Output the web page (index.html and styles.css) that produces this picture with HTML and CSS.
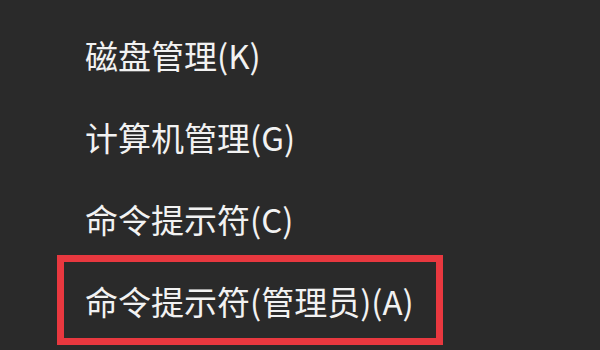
FILE: index.html
```html
<!DOCTYPE html>
<html lang="zh-CN">
<head>
<meta charset="utf-8">
<title>Win+X 菜单</title>
<link rel="stylesheet" href="styles.css">
</head>
<body>
<div class="menu">
  <div class="item">磁盘管理(K)</div>
  <div class="item">计算机管理(G)</div>
  <div class="item">命令提示符(C)</div>
  <div class="item selected">命令提示符(管理员)(A)</div>
</div>
</body>
</html>
```

FILE: styles.css
```css
html, body {
  margin: 0;
  padding: 0;
  background: #2a2a2a;
}

body {
  width: 600px;
  height: 350px;
  overflow: hidden;
  font-family: "Noto Sans CJK SC", "Noto Sans", "Liberation Sans", sans-serif;
}

.menu {
  display: flex;
  flex-direction: column;
  padding-top: 14px;
}

.item {
  position: relative;
  height: 82px;
  line-height: 82px;
  padding-left: 85px;
  font-size: 33px;
  color: #f2f2f2;
  white-space: nowrap;
}

.selected::before {
  content: "";
  position: absolute;
  left: 57px;
  top: -5px;
  width: 372px;
  height: 76px;
  border: 7px solid #e8383f;
}
```
